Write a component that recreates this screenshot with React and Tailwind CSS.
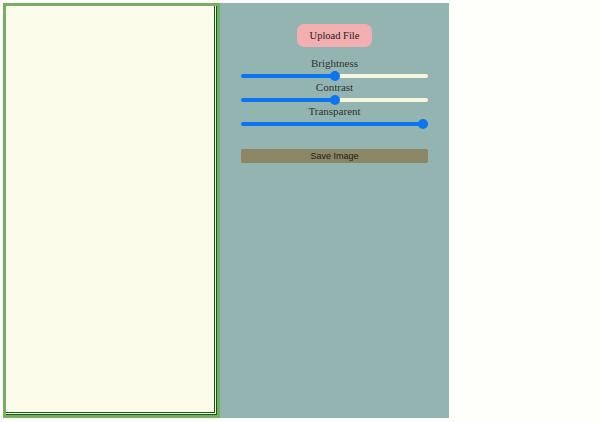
import React from "react";

function Slider({ value }) {
  const pct = value;
  return (
    <input
      type="range"
      defaultValue={value}
      className="block w-[187px] h-[4px] my-[4px] appearance-none rounded-[2px] outline-none [&::-webkit-slider-thumb]:appearance-none [&::-webkit-slider-thumb]:w-[10px] [&::-webkit-slider-thumb]:h-[10px] [&::-webkit-slider-thumb]:rounded-full [&::-webkit-slider-thumb]:bg-[#0b74f0]"
      style={{
        background: `linear-gradient(to right, #0b74f0 0%, #0b74f0 ${pct}%, #f6f6e2 ${pct}%, #f6f6e2 100%)`,
      }}
    />
  );
}

export default function App() {
  return (
    <div className="w-[600px] h-[422px] bg-[#fefefa] p-[3px]" style={{ fontFamily: '"Liberation Serif", serif' }}>
      <div className="flex w-[446px] h-[415px]">
        <div className="w-[217px] h-full border-[3px] border-[#78ae62]">
          <div className="w-full h-full border-r border-b border-[#0b5e0b] bg-[#fcfcea] flex">
            <div className="flex-1 border-r border-b border-[#0b5e0b] mr-[1px] mb-[1px]" />
          </div>
        </div>
        <div className="w-[229px] h-full bg-[#93b4b1] flex flex-col items-center pt-[21px]">
          <button className="h-[23px] px-[13px] rounded-[7px] bg-[#f2aeb1] text-[10.5px] font-normal text-[#2a2020]" style={{ fontFamily: '"Liberation Serif", serif' }}>
            Upload File
          </button>
          <div className="mt-[10px] text-[11px] leading-[13px] text-[#2b3333]">Brightness</div>
          <Slider value={50} />
          <div className="text-[11px] leading-[13px] text-[#2b3333] -mt-[1px]">Contrast</div>
          <Slider value={50} />
          <div className="text-[11px] leading-[13px] text-[#2b3333] -mt-[1px]">Transparent</div>
          <Slider value={100} />
          <button className="mt-[19px] w-[187px] h-[14px] rounded-[2px] bg-[#8b8664] text-[9px] leading-[14px] text-[#1a1a1a]" style={{ fontFamily: '"Liberation Sans", Arial, sans-serif' }}>
            Save Image
          </button>
        </div>
      </div>
    </div>
  );
}
